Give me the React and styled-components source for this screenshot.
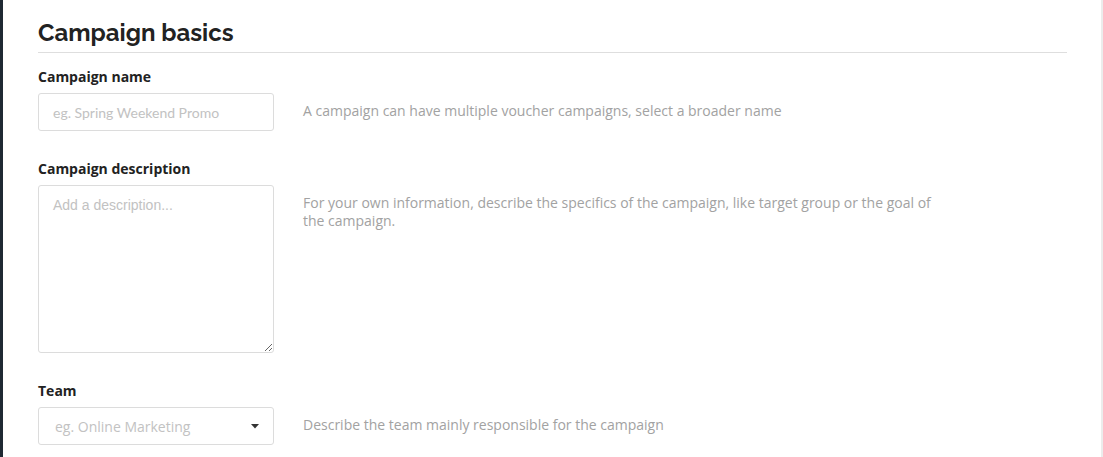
import React from "react";
import styled, { createGlobalStyle } from "styled-components";

const GlobalStyle = createGlobalStyle`
  html, body {
    margin: 0;
    padding: 0;
    background: #fff;
    font-family: "Open Sans", "Liberation Sans", sans-serif;
  }
`;

const fields = [
  {
    id: "name",
    label: "Campaign name",
    kind: "input",
    placeholder: "eg. Spring Weekend Promo",
    help: "A campaign can have multiple voucher campaigns, select a broader name",
  },
  {
    id: "description",
    label: "Campaign description",
    kind: "textarea",
    placeholder: "Add a description...",
    help: "For your own information, describe the specifics of the campaign, like target group or the goal of the campaign.",
  },
  {
    id: "team",
    label: "Team",
    kind: "select",
    placeholder: "eg. Online Marketing",
    help: "Describe the team mainly responsible for the campaign",
  },
];

const Caret = () => (
  <svg width="8" height="5" viewBox="0 0 8 5">
    <path d="M0 0 L8 0 L4 4.5 Z" fill="#333" />
  </svg>
);

const Control = ({ field }) => {
  if (field.kind === "textarea") {
    return <TextArea placeholder={field.placeholder} />;
  }
  if (field.kind === "select") {
    return (
      <SelectBox>
        <SelectText>{field.placeholder}</SelectText>
        <Caret />
      </SelectBox>
    );
  }
  return <TextInput placeholder={field.placeholder} />;
};

const App = () => {
  return (
    <Page>
      <GlobalStyle />
      <Sidebar />
      <Main>
        <Heading>Campaign basics</Heading>
        <Form>
          {fields.map((field) => (
            <Field key={field.id}>
              <Label>{field.label}</Label>
              <Row>
                <Control field={field} />
                <Help>{field.help}</Help>
              </Row>
            </Field>
          ))}
        </Form>
      </Main>
      <Edge />
    </Page>
  );
};

const Page = styled.div`
  display: flex;
  height: 457px;
  overflow: hidden;
`;

const Sidebar = styled.div`
  width: 3px;
  flex-shrink: 0;
  background: #1f2933;
`;

const Edge = styled.div`
  width: 2px;
  flex-shrink: 0;
  background: #ececec;
`;

const Main = styled.div`
  flex: 1;
  padding: 18px 34px 0 35px;
`;

const Heading = styled.h2`
  margin: 0;
  padding-bottom: 4px;
  border-bottom: 1px solid #dedede;
  font-family: "Raleway", "Lato", sans-serif;
  font-weight: 700;
  font-size: 24px;
  line-height: 30px;
  color: #222;
`;

const Form = styled.div`
  display: flex;
  flex-direction: column;
  gap: 28px;
  padding-top: 14px;
`;

const Field = styled.div`
  display: flex;
  flex-direction: column;
  gap: 6px;
`;

const Label = styled.label`
  font-family: "Open Sans", sans-serif;
  font-weight: 700;
  font-size: 14px;
  line-height: 20px;
  color: #222;
`;

const Row = styled.div`
  display: grid;
  grid-template-columns: 236px 640px;
  column-gap: 29px;
  align-items: start;
`;

const boxBase = `
  box-sizing: border-box;
  width: 236px;
  border: 1px solid #dcdcdc;
  border-radius: 3px;
  background: #fff;
  outline: none;
`;

const TextInput = styled.input`
  ${boxBase}
  height: 38px;
  padding: 0 14px;
  font-family: "Lato", sans-serif;
  font-size: 14px;
  color: #333;
  &::placeholder {
    color: #c2c2c2;
  }
`;

const TextArea = styled.textarea`
  ${boxBase}
  display: block;
  height: 168px;
  padding: 11px 14px;
  font-family: "Liberation Sans", Arial, sans-serif;
  font-size: 14px;
  color: #333;
  resize: vertical;
  &::placeholder {
    color: #c2c2c2;
  }
`;

const SelectBox = styled.div`
  ${boxBase}
  height: 38px;
  display: flex;
  align-items: center;
  justify-content: space-between;
  padding: 0 14px 0 16px;
`;

const SelectText = styled.span`
  font-family: "Open Sans", sans-serif;
  font-size: 14px;
  color: #c2c2c2;
`;

const Help = styled.p`
  margin: 0;
  padding-top: 9px;
  font-family: "Open Sans", sans-serif;
  font-size: 14px;
  line-height: 18px;
  color: #a2a2a2;
`;

export default App;
